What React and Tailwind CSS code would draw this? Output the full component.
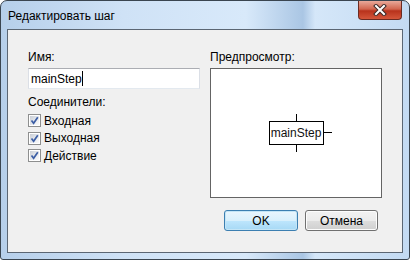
import React from "react";

const font = { fontFamily: '"Liberation Sans", Arial, sans-serif' };

function CheckRow({ label }) {
  return (
    <div className="h-[17.5px] flex items-center gap-[3px]">
      <div className="w-[13px] h-[13px] border border-[#8e8f8f] bg-white p-[1px]">
        <div className="w-full h-full bg-[linear-gradient(135deg,#c9ced6,#eef0f3_70%,#fafafa)] relative">
          <svg width="11" height="11" viewBox="0 0 11 11" className="absolute -left-[1px] -top-[1px]">
            <path d="M2.5 5.5 L4.6 8.2 L8.8 2.2" fill="none" stroke="#3c5ea5" strokeWidth="1.7" />
          </svg>
        </div>
      </div>
      <span className="text-[12px] text-black leading-none">{label}</span>
    </div>
  );
}

export default function App() {
  return (
    <div className="w-[410px] h-[260px] bg-white" style={font}>
      <div className="w-[410px] h-[260px] flex flex-col rounded-t-[7px] rounded-b-[3px] border border-[#3a4550] bg-[linear-gradient(to_right,#b6cfea,#cfe2f6_30%,#d8e9fa_60%,#aac6e4_74%,#d5e7f9_77%,#c3daf2)] overflow-hidden">
        {/* title bar */}
        <div className="h-[28px] flex justify-between">
          <div className="pl-[7px] pt-[8px] text-[12px] leading-[14px] text-black">Редактировать шаг</div>
          <div className="mr-[7px] w-[44px] h-[19px] rounded-b-[4px] border border-t-0 border-[#6b2b22] bg-[linear-gradient(to_bottom,#e9a99a,#d2664f_45%,#b8321c_55%,#d4563a)] flex items-center justify-center">
            <svg width="14" height="12" viewBox="0 0 14 12">
              <path d="M3 2 L11 10 M11 2 L3 10" stroke="#3d2a28" strokeWidth="4" strokeLinecap="square" />
              <path d="M3 2 L11 10 M11 2 L3 10" stroke="#ffffff" strokeWidth="2" strokeLinecap="square" />
            </svg>
          </div>
        </div>

        {/* client area */}
        <div className="flex-1 mx-[6px] mb-[6px] border border-[#5b6673] bg-[#f0f0f0] pl-[20px] pt-[19px] flex gap-[10px]">
          <div className="w-[172px] flex flex-col">
            <div className="h-[16px] mb-[3px] text-[12px] leading-[16px] text-black">Имя:</div>
            <div className="h-[21px] border border-[#abadb3] border-l-[#dbdfe6] border-r-[#dbdfe6] border-b-[#e3e9ef] bg-white flex items-center pl-[2px]">
              <span className="text-[12px] leading-none text-black">mainStep</span>
              <span className="w-[1px] h-[15px] bg-black"></span>
            </div>
            <div className="h-[16px] mt-[5px] text-[12px] leading-[16px] text-black">Соединители:</div>
            <div className="mt-[2px] flex flex-col">
              <CheckRow label="Входная" />
              <CheckRow label="Выходная" />
              <CheckRow label="Действие" />
            </div>
          </div>

          <div className="w-[172px] flex flex-col">
            <div className="h-[16px] mb-[3px] text-[12px] leading-[16px] text-black">Предпросмотр:</div>
            <div className="h-[130px] border border-[#646464] bg-white flex items-center justify-center">
              <div className="relative w-[55px] h-[24px] border border-black flex items-center justify-center">
                <span className="text-[12px] leading-none text-[#111]">mainStep</span>
                <span className="absolute left-[26px] -top-[8px] w-[1px] h-[7px] bg-black"></span>
                <span className="absolute left-[26px] -bottom-[8px] w-[1px] h-[7px] bg-black"></span>
                <span className="absolute -right-[9px] top-[10px] w-[8px] h-[1px] bg-black"></span>
              </div>
            </div>
            <div className="mt-[12px] flex gap-[7px] pl-[14px]">
              <button className="w-[74px] h-[21px] rounded-[3px] border border-[#3c7fb1] bg-[linear-gradient(to_bottom,#eaf6fd,#d9f0fc_50%,#bee6fd_51%,#a7d9f5)] shadow-[inset_0_0_0_1px_#c4e5f6] text-[12px] text-black">
                OK
              </button>
              <button className="w-[73px] h-[21px] rounded-[3px] border border-[#707070] bg-[linear-gradient(to_bottom,#f2f2f2,#ebebeb_50%,#dddddd_51%,#cfcfcf)] shadow-[inset_0_0_0_1px_#fcfcfc] text-[12px] text-black">
                Отмена
              </button>
            </div>
          </div>
        </div>
      </div>
    </div>
  );
}
